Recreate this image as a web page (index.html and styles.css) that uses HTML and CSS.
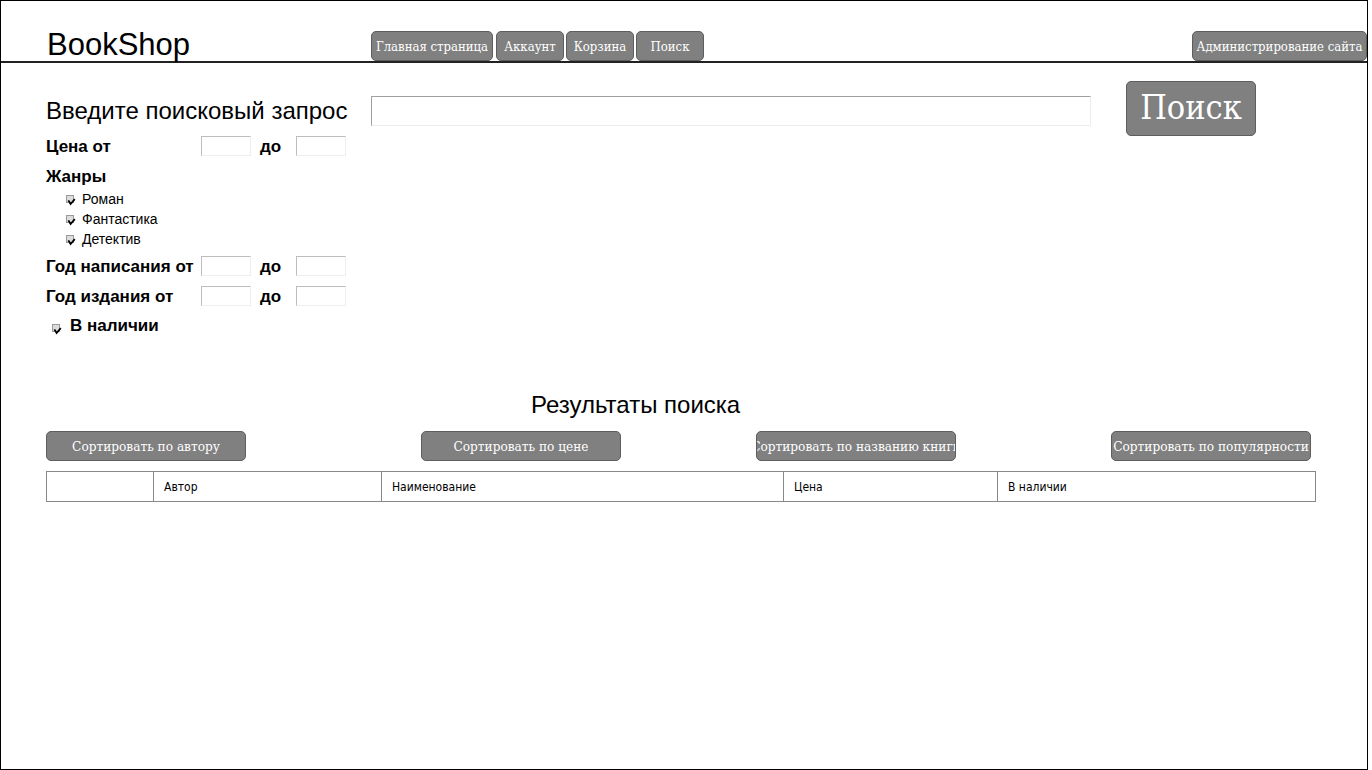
FILE: index.html
```html
<!DOCTYPE html>
<html lang="ru">
<head>
<meta charset="utf-8">
<title>BookShop</title>
<link rel="stylesheet" href="styles.css">
</head>
<body>
<div class="frame">
  <header class="header">
    <div class="logo">BookShop</div>
    <nav class="nav">
      <a class="btn nav-btn nav-main">Главная страница</a>
      <a class="btn nav-btn">Аккаунт</a>
      <a class="btn nav-btn">Корзина</a>
      <a class="btn nav-btn">Поиск</a>
    </nav>
    <a class="btn nav-btn nav-admin">Администрирование сайта</a>
  </header>

  <main class="content">
    <div class="search-row">
      <div class="search-label">Введите поисковый запрос</div>
      <div class="field search-input"></div>
      <div class="btn search-btn">Поиск</div>
    </div>

    <div class="filter-row">
      <div class="f-label">Цена от</div>
      <div class="field small"></div>
      <div class="f-to">до</div>
      <div class="field small"></div>
    </div>

    <div class="genres-title">Жанры</div>
    <ul class="genres">
      <li class="genre"><svg class="cb" width="12" height="12" viewBox="0 0 12 12"><rect x="0.5" y="0.5" width="7" height="7" fill="#dcdcdc" stroke="#9a9a9a"/><path d="M2.4 5.4 L4.6 9 L8.8 4.2" fill="none" stroke="#000" stroke-width="1.8"/></svg><span>Роман</span></li>
      <li class="genre"><svg class="cb" width="12" height="12" viewBox="0 0 12 12"><rect x="0.5" y="0.5" width="7" height="7" fill="#dcdcdc" stroke="#9a9a9a"/><path d="M2.4 5.4 L4.6 9 L8.8 4.2" fill="none" stroke="#000" stroke-width="1.8"/></svg><span>Фантастика</span></li>
      <li class="genre"><svg class="cb" width="12" height="12" viewBox="0 0 12 12"><rect x="0.5" y="0.5" width="7" height="7" fill="#dcdcdc" stroke="#9a9a9a"/><path d="M2.4 5.4 L4.6 9 L8.8 4.2" fill="none" stroke="#000" stroke-width="1.8"/></svg><span>Детектив</span></li>
    </ul>

    <div class="filter-row row-written">
      <div class="f-label">Год написания от</div>
      <div class="field small"></div>
      <div class="f-to">до</div>
      <div class="field small"></div>
    </div>

    <div class="filter-row row-published">
      <div class="f-label">Год издания от</div>
      <div class="field small"></div>
      <div class="f-to">до</div>
      <div class="field small"></div>
    </div>

    <div class="stock-row">
      <svg class="cb cb-stock" width="12" height="12" viewBox="0 0 12 12"><rect x="0.5" y="0.5" width="7" height="7" fill="#dcdcdc" stroke="#9a9a9a"/><path d="M2.4 5.4 L4.6 9 L8.8 4.2" fill="none" stroke="#000" stroke-width="1.8"/></svg>
      <span>В наличии</span>
    </div>

    <h2 class="results-title">Результаты поиска</h2>

    <div class="sort-row">
      <div class="btn sort-btn s1">Сортировать по автору</div>
      <div class="btn sort-btn s2">Сортировать по цене</div>
      <div class="btn sort-btn s3">Сортировать по названию книги</div>
      <div class="btn sort-btn s4">Сортировать по популярности</div>
    </div>

    <table class="results">
      <colgroup>
        <col class="col1"><col class="col2"><col class="col3"><col class="col4"><col class="col5">
      </colgroup>
      <tr>
        <td></td>
        <td>Автор</td>
        <td>Наименование</td>
        <td>Цена</td>
        <td>В наличии</td>
      </tr>
    </table>
  </main>
</div>
</body>
</html>
```

FILE: styles.css
```css
html, body {
  margin: 0;
  padding: 0;
  background: #fff;
}

body {
  font-family: "Liberation Sans", Arial, sans-serif;
  color: #000;
}

.frame {
  width: 1368px;
  height: 770px;
  border: 1px solid #000;
  box-sizing: border-box;
  overflow: hidden;
}

/* Header */
.header {
  display: flex;
  align-items: flex-end;
  height: 62px;
  box-sizing: border-box;
  border-bottom: 2px solid #222;
  padding-left: 46px;
}

.logo {
  width: 324px;
  font-size: 31px;
  line-height: 32px;
  margin-bottom: 0;
}

.nav {
  display: flex;
  gap: 2px;
}

.btn {
  display: flex;
  align-items: center;
  justify-content: center;
  box-sizing: border-box;
  background: #808080;
  border: 1px solid #5e5e5e;
  border-radius: 5px;
  color: #fff;
  font-family: "DejaVu Serif Condensed", "DejaVu Serif", serif;
  font-stretch: condensed;
  white-space: nowrap;
  overflow: hidden;
}

.nav-btn {
  width: 68px;
  height: 30px;
  font-size: 13px;
}

.nav-main {
  width: 122px;
  margin-right: 1px;
}

.nav-admin {
  width: 175px;
  margin-left: auto;
}

/* Content */
.content {
  padding-left: 45px;
}

.search-row {
  display: flex;
  align-items: flex-start;
  padding-top: 18px;
}

.search-label {
  width: 325px;
  margin-top: 15px;
  font-size: 24px;
  line-height: 30px;
  white-space: nowrap;
}

.field {
  box-sizing: border-box;
  background: #fff;
  border: 1px solid;
  border-color: #a0a0a0 #ececec #ececec #a0a0a0;
}

.search-input {
  width: 720px;
  height: 30px;
  margin-top: 15px;
}

.search-btn {
  width: 130px;
  height: 55px;
  margin-left: 35px;
  font-size: 34px;
  padding-bottom: 3px;
}

.filter-row {
  display: flex;
  align-items: center;
  height: 20px;
}

.f-label {
  width: 155px;
  font-size: 17px;
  font-weight: bold;
  line-height: 20px;
  padding-top: 1px;
  white-space: nowrap;
}

.field.small {
  width: 50px;
  height: 20px;
  border-color: #bdbdbd #eeeeee #eeeeee #bdbdbd;
}

.f-to {
  width: 45px;
  box-sizing: border-box;
  padding-left: 9px;
  padding-top: 1px;
  font-size: 17px;
  font-weight: bold;
}

.genres-title {
  margin-top: 10px;
  font-size: 17px;
  font-weight: bold;
  line-height: 20px;
  padding-top: 1px;
  height: 20px;
  box-sizing: border-box;
}

.genres {
  list-style: none;
  margin: 3px 0 0;
  padding: 0 0 0 20px;
}

.genre {
  display: flex;
  align-items: center;
  height: 20px;
  font-size: 14px;
}

.cb {
  flex: none;
  margin-right: 4px;
  margin-top: 4px;
}

.row-written {
  margin-top: 7px;
}

.row-published {
  margin-top: 10px;
}

.stock-row {
  display: flex;
  align-items: center;
  height: 20px;
  margin-top: 10px;
  padding-left: 6px;
  font-size: 17px;
  font-weight: bold;
}

.cb-stock {
  margin-right: 6px;
  margin-top: 8px;
}

.results-title {
  margin: 56px 0 0 485px;
  font-size: 24px;
  font-weight: normal;
  line-height: 26px;
}

.sort-row {
  display: flex;
  margin-top: 13px;
}

.sort-btn {
  width: 200px;
  height: 30px;
  font-size: 13.5px;
}

.s2 { margin-left: 175px; }
.s3 { margin-left: 135px; }
.s4 { margin-left: 155px; }

.results {
  margin-top: 10px;
  width: 1269px;
  table-layout: fixed;
  border-collapse: collapse;
  border: 1px solid #888;
}

.col1 { width: 107px; }
.col2 { width: 228px; }
.col3 { width: 402px; }
.col4 { width: 214px; }
.col5 { width: 318px; }

.results td {
  height: 29px;
  padding: 0 0 0 10px;
  border: 1px solid #888;
  font-family: "DejaVu Sans Condensed", "DejaVu Sans", sans-serif;
  font-stretch: condensed;
  font-size: 12px;
}
```
